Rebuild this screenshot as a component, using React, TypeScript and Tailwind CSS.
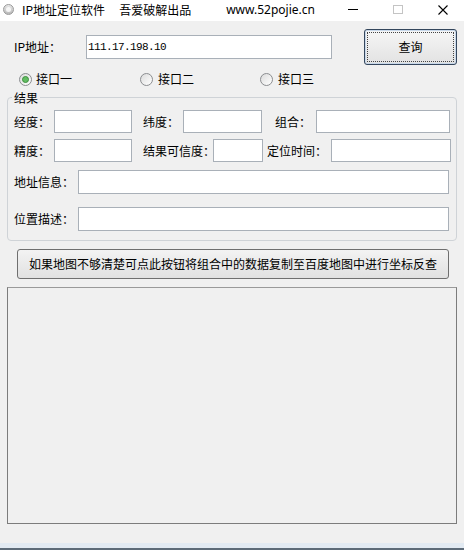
import React from 'react';

interface BoxProps {
  w: string;
  h?: string;
}

const TextBox: React.FC<BoxProps> = ({ w, h = 'h-[23px]' }) => (
  <div className={`${w} ${h} shrink-0 border border-[#a9b0b8] bg-white`} />
);

const Label: React.FC<{ w: string; ml?: string; children: React.ReactNode }> = ({ w, ml = '', children }) => (
  <span className={`${w} ${ml} shrink-0 whitespace-nowrap`}>{children}</span>
);

const Radio: React.FC<{ checked?: boolean }> = ({ checked }) => (
  <span className="flex h-[13px] w-[13px] shrink-0 items-center justify-center rounded-full border border-[#8b8d90] bg-linear-to-br from-[#dcdcdc] to-white">
    {checked && <span className="h-[7px] w-[7px] rounded-full border border-[#3f8f3f] bg-[#62bd62]" />}
  </span>
);

const App: React.FC = () => {
  return (
    <div className="flex h-[550px] w-[464px] flex-col overflow-hidden bg-[#f0f0f0] font-['Noto_Sans_CJK_SC',sans-serif] text-[12px] leading-none text-black">
      {/* title bar */}
      <div className="flex h-[21px] shrink-0 items-center bg-white pb-[2px]">
        <span className="ml-[3px] flex h-[11px] w-[11px] items-center justify-center rounded-full border border-[#9a9a9a] bg-linear-to-b from-[#e8e8e8] to-[#b8b8b8]">
          <span className="h-[5px] w-[5px] rounded-full bg-white/80" />
        </span>
        <span className="ml-[8px]">IP地址定位软件</span>
        <span className="ml-[14px]">吾爱破解出品</span>
        <span className="ml-[35px] font-['Noto_Sans',sans-serif]">www.52pojie.cn</span>
        <span className="ml-auto h-[1px] w-[10px] bg-black" />
        <span className="ml-[35px] h-[9px] w-[10px] border border-[#c4c4c4]" />
        <svg className="ml-[35px] mr-[16px]" width="10" height="10" viewBox="0 0 10 10">
          <path d="M0.5 0.5 L9.5 9.5 M9.5 0.5 L0.5 9.5" stroke="#000" strokeWidth="1.1" fill="none" />
        </svg>
      </div>

      {/* ip row */}
      <div className="mt-[8px] flex h-[36px] shrink-0 items-center pl-[14px]">
        <Label w="w-[72px]">IP地址：</Label>
        <div className="flex h-[24px] w-[246px] items-center border border-[#a9b0b8] bg-white pl-[1px] font-['Liberation_Mono',monospace] text-[11px] tracking-[-0.6px]">
          111.17.198.10
        </div>
        <button className="ml-[32px] flex h-[36px] w-[93px] rounded-[3px] border border-[#34465c] bg-linear-to-b from-[#f6f6f6] to-[#e2e2e2] p-[2px] shadow-[inset_0_0_0_1px_#c8d8ea]">
          <span className="flex h-full w-full items-center justify-center border border-dotted border-[#444] text-[12px]">查询</span>
        </button>
      </div>

      {/* radio row */}
      <div className="mt-[7px] flex h-[14px] shrink-0 items-center pl-[19px]">
        <div className="flex w-[121px] items-center gap-[4px]">
          <Radio checked />
          <span>接口一</span>
        </div>
        <div className="flex w-[120px] items-center gap-[5px]">
          <Radio />
          <span>接口二</span>
        </div>
        <div className="flex items-center gap-[5px]">
          <Radio />
          <span>接口三</span>
        </div>
      </div>

      {/* result group */}
      <fieldset className="mx-[7px] mt-[4px] shrink-0 rounded-[4px] border border-[#cfd3d7] pb-[9px] pl-[6px]">
        <legend className="ml-[-2px] px-[2px] leading-[15px]">结果</legend>
        <div className="mt-[5px] flex h-[23px] items-center">
          <Label w="w-[40px]">经度：</Label>
          <TextBox w="w-[78px]" />
          <Label w="w-[40px]" ml="ml-[11px]">纬度：</Label>
          <TextBox w="w-[79px]" />
          <Label w="w-[41px]" ml="ml-[13px]">组合：</Label>
          <TextBox w="w-[134px]" />
        </div>
        <div className="mt-[6px] flex h-[23px] items-center">
          <Label w="w-[40px]">精度：</Label>
          <TextBox w="w-[78px]" />
          <Label w="w-[70px]" ml="ml-[11px]">结果可信度：</Label>
          <TextBox w="w-[50px]" />
          <Label w="w-[64px]" ml="ml-[4px]">定位时间：</Label>
          <TextBox w="w-[120px]" />
        </div>
        <div className="mt-[8px] flex h-[24px] items-center">
          <Label w="w-[64px]">地址信息：</Label>
          <TextBox w="w-[371px]" h="h-[24px]" />
        </div>
        <div className="mt-[13px] flex h-[24px] items-center">
          <Label w="w-[64px]">位置描述：</Label>
          <TextBox w="w-[371px]" h="h-[24px]" />
        </div>
      </fieldset>

      <button className="ml-[17px] mt-[8px] flex h-[30px] w-[432px] shrink-0 items-center justify-center rounded-[3px] border border-[#6f6f6f] bg-linear-to-b from-[#f3f3f3] to-[#e1e1e1]">
        如果地图不够清楚可点此按钮将组合中的数据复制至百度地图中进行坐标反查
      </button>

      {/* map panel */}
      <div className="mx-[7px] mt-[8px] h-[237px] w-[450px] shrink-0 border border-[#7c7c7c] border-t-[#9a9a9a] bg-[#f0f0f0]" />

      <div className="flex-1" />
      <div className="h-[5px] shrink-0 bg-[#e2eaf2]" />
      <div className="h-[2px] shrink-0 bg-[#5d6b78]" />
    </div>
  );
};

export default App;
